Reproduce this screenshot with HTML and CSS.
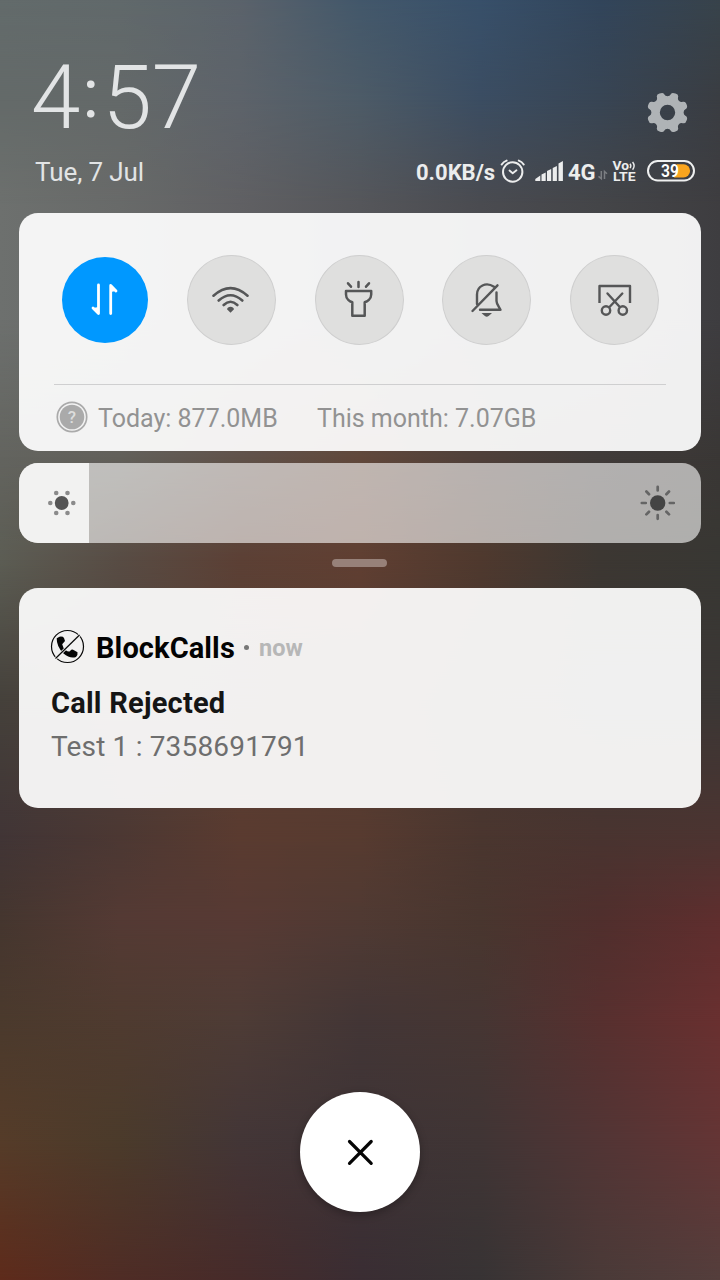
FILE: index.html
```html
<!DOCTYPE html>
<html lang="en">
<head>
<meta charset="utf-8">
<title>Notifications</title>
<link rel="stylesheet" href="styles.css">
</head>
<body>
<div class="wallpaper">
  <div class="band band-1"></div><div class="band band-2"></div><div class="band band-3"></div>
  <div class="band band-4"></div><div class="band band-5"></div><div class="band band-6"></div>
  <div class="band band-7"></div><div class="band band-8"></div><div class="band band-9"></div>
  <div class="band band-10"></div>
</div>
<main class="shade">
  <header class="header">
    <div class="when">
      <div class="clock">4<span class="colon">:</span>57</div>
      <div class="date">Tue, 7 Jul</div>
    </div>
    <div class="system">
      <svg class="gear" viewBox="647 92 41 41" width="41" height="41">
        <path fill-rule="evenodd" d="M659.5 93.6Q663 91.9 664.2 94.2Q665.200 96.300 667.500 96.300Q669.800 96.300 670.800 94.200Q672 91.900 675.500 93.600Q679 94.500 678 97.600Q677.600 99.700 679.100 101.100Q680.600 102.400 682.700 101.800Q685.600 101 686.700 104.800Q688 108 685.400 109.200Q683.600 110.300 683.600 112.500Q683.600 114.700 685.400 115.800Q688 117 686.700 120.200Q685.600 124 682.700 123.200Q680.600 122.600 679.100 123.900Q677.600 125.300 678 127.400Q679 130.500 675.500 131.400Q672 133.100 670.800 130.800Q669.800 128.700 667.500 128.700Q665.200 128.700 664.200 130.800Q663 133.100 659.500 131.400Q656 130.500 657 127.400Q657.400 125.300 655.900 123.900Q654.400 122.600 652.300 123.200Q649.400 124 648.300 120.200Q647 117 649.600 115.800Q651.400 114.700 651.400 112.500Q651.400 110.300 649.600 109.200Q647 108 648.300 104.800Q649.400 101 652.300 101.800Q654.400 102.400 655.900 101.100Q657.400 99.700 657 97.600Q656 94.500 659.500 93.600ZM667.500 104.800a7.700 7.700 0 1 0 0 15.400a7.700 7.700 0 1 0 0-15.400Z" fill="#afb3b6"/>
      </svg>
      <div class="status">
        <span class="rate">0.0KB/s</span>
        <svg class="alarm" viewBox="500 158 26 26" width="26" height="26" fill="none" stroke="#eceded" stroke-linecap="round">
          <circle cx="512.700" cy="172" r="9.700" stroke-width="2"/>
          <path d="M501.700 164.500Q503.500 161.700 506.600 160.600M518.800 160.600Q521.900 161.700 523.700 164.500" stroke-width="2"/>
          <path d="M509.500 170.500L512.700 173.300L516.500 170.200" stroke-width="1.800" stroke-linejoin="round"/>
        </svg>
        <svg class="signal" viewBox="535 160 29 22" width="29" height="22" fill="#eceded">
          <path d="M535.300 181V179L540.300 175.500V181ZM541.500 174.500L545.700 172.500V181H541.500ZM547 171L551.200 169V181H547ZM552.700 168L556.900 166V181H552.700ZM558.500 163.500L562.900 161V181H558.500Z"/>
        </svg>
        <span class="net">4G</span>
        <svg class="tiny-arrows" viewBox="597 170 11 12" width="11" height="12" fill="none" stroke="#7b7e82" stroke-width="1.500"><path d="M601.300 172V179.600L598.500 177.300M604.500 180V172.500L607 174.700"/></svg>
        <svg class="volte" viewBox="612 158 25 26" width="25" height="26" fill="#eceded">
          <text x="612.500" y="169.500" textLength="16.500" lengthAdjust="spacingAndGlyphs">Vo</text>
          <text x="613" y="181.300" textLength="22.500" lengthAdjust="spacingAndGlyphs">LTE</text>
          <path d="M630 163.700Q631.700 165.800 630 168.200M632.600 162Q635.600 165.800 632.600 169.700" fill="none" stroke="#eceded" stroke-width="1.400"/>
        </svg>
        <svg class="battery" viewBox="646 159 50 24" width="50" height="24">
          <rect x="648" y="161" width="46" height="19.500" rx="9.750" fill="none" stroke="#eff0f0" stroke-width="2"/>
          <path d="M677 164.200H683.500a6.600 6.600 0 0 1 0 13.200H674Z" fill="#faa51e"/>
          <text x="661" y="177" fill="#fff" textLength="18" lengthAdjust="spacingAndGlyphs">39</text>
        </svg>
      </div>
    </div>
  </header>

  <section class="panel">
    <div class="toggles">
      <div class="toggle active"><svg viewBox="90 282 30 36" width="30" height="36" fill="none" stroke="#fff" stroke-width="2.800" stroke-linecap="round" stroke-linejoin="round"><path d="M98.500 285V313.500L93 308M110.700 313.500V285.500L116 291"/><path d="M98.500 307V313.500L93 308ZM110.700 286V292L116 291Z" fill="#fff" stroke="none"/></svg></div>
      <div class="toggle"><svg viewBox="211 284 42 32" width="42" height="32" fill="none" stroke="#555657" stroke-width="2.600" stroke-linecap="round"><path d="M214.500 295.700Q231.500 280.500 248.500 295.700M219.700 300.500Q231.500 290 243.300 300.500M224.700 305Q231.500 298.500 238.300 305"/><path d="M228 309.300Q228.500 306.700 231.500 306.700Q234.500 306.700 235 309.300L231.500 312.700Z" fill="#555657" stroke="none"/></svg></div>
      <div class="toggle"><svg viewBox="343 280 32 40" width="32" height="40" fill="none" stroke="#555657" stroke-width="2.500" stroke-linecap="round" stroke-linejoin="round"><path d="M348 283.300L351 286.700M358.500 282V287M369 283.300L366 286.700M346 291H371.200V294.500C371.200 299 367 301.500 364.700 302.200V315.700H352.300V302.200C350 301.500 346 299 346 294.500Z"/></svg></div>
      <div class="toggle"><svg viewBox="470 281 34 38" width="34" height="38" fill="none" stroke="#555657" stroke-width="2.400" stroke-linecap="round" stroke-linejoin="round"><path d="M472.500 311L497.500 285.300M494 286.700C486 281.500 477 286 477 294.500V304M496.500 292.500V301C496.500 304 498.500 306 500.500 309.700H480"/><path d="M481.500 313H492Q488.500 316.700 486.700 316.700Q485 316.700 481.500 313Z" fill="#555657" stroke="none"/></svg></div>
      <div class="toggle"><svg viewBox="597 283 36 34" width="36" height="34" fill="none" stroke="#555657" stroke-width="2.400" stroke-linecap="round" stroke-linejoin="round"><path d="M599.500 303V286H630V303" stroke-linecap="butt"/><path d="M607.500 293.500L619.800 307M622.300 293.500L609.500 307"/><circle cx="606" cy="310.500" r="4.200"/><circle cx="622.800" cy="310.500" r="4.200"/></svg></div>
    </div>
    <div class="usage">
      <svg class="help" viewBox="56 401 32 32" width="32" height="32"><circle cx="72" cy="417" r="14.700" fill="none" stroke="#aaa" stroke-width="1.700"/><circle cx="72" cy="417" r="12.300" fill="#aaa"/><text x="72" y="423" text-anchor="middle" fill="#ddd">?</text></svg>
      <span class="today">Today: 877.0MB</span>
      <span class="month">This month: 7.07GB</span>
    </div>
  </section>

  <section class="brightness">
    <div class="level"><svg viewBox="47 489 30 28" width="30" height="28" fill="#8b8b8b"><circle cx="61.700" cy="503" r="6.900" fill="#555"/><circle cx="50.300" cy="503" r="2.300"/><circle cx="73.300" cy="503" r="2.300"/><circle cx="56.200" cy="493" r="2.300"/><circle cx="67.500" cy="493" r="2.300"/><circle cx="56.200" cy="513" r="2.300"/><circle cx="67.500" cy="513" r="2.300"/></svg></div>
    <svg viewBox="639 484 38 38" width="38" height="38" fill="none" stroke="#656565" stroke-width="2.700" stroke-linecap="round"><circle cx="657.700" cy="503" r="7.700" fill="#444" stroke="none"/><path d="M657.700 486.800V490.500M657.700 515V518.800M641.800 503H645.800M669.800 503H673.800M646.400 491.500L649 494.200M669 491.500L666.400 494.200M646.400 514.400L649 511.700M669 514.400L666.400 511.700"/></svg>
  </section>
  <div class="handle"></div>

  <article class="notice">
    <div class="app">
      <svg viewBox="50 629 35 35" width="35" height="35"><circle cx="67.500" cy="646.500" r="16" fill="none" stroke="#080808" stroke-width="1.200"/><path d="M56.700 638.200L59.500 636.700Q63 636.200 64 638L65 641L62.200 644.200Q63 648 65.500 650Q68 652 69.500 651.500L71.300 649.700Q72.500 649.200 74 650.200L77.500 652.200Q78 655 76 657Q70 659 63.500 653.500Q56.500 646.500 56.700 638.200Z" fill="#050505"/><path d="M55.500 658.500L79.500 635" stroke="#f1f1f0" stroke-width="3"/><path d="M55.500 658.500L79.500 635" stroke="#080808" stroke-width="1.200"/></svg>
      <span class="app-name">BlockCalls</span>
      <span class="dot"></span>
      <span class="age">now</span>
    </div>
    <h1 class="title">Call Rejected</h1>
    <p class="detail">Test 1 : 7358691791</p>
  </article>

  <button class="clear" aria-label="Clear notifications"><svg viewBox="346 1138 28 28" width="28" height="28" stroke="#050505" stroke-width="3.200" stroke-linecap="round"><path d="M349.500 1141.500L371.200 1163.300M371.200 1141.500L349.500 1163.300"/></svg></button>
</main>
</body>
</html>
```
FILE: styles.css
```css
* { box-sizing: border-box; }
body { margin: 0; font-family: Roboto, "Noto Sans", sans-serif; }
svg { display: block; flex: none; }
span, .clock, .date { white-space: nowrap; }

/* Wallpaper: horizontal colour rows, each one fading in over the row above it. */
.wallpaper { position: absolute; top: 0; left: 0; width: 720px; height: 1280px; overflow: hidden; background: linear-gradient(90deg, #636b6b, #61696b, #5b636b, #43586b, #38506a, #32455b, #38434b); }
.band { position: absolute; inset: 0; -webkit-mask-image: linear-gradient(transparent var(--from), #000 var(--to)); mask-image: linear-gradient(transparent var(--from), #000 var(--to)); }
.band-1 { --from: 0px; --to: 100px; background: linear-gradient(90deg, #646a69, #646969, #5d636a, #4d5b67, #3b4d62, #384554, #3a3d42); }
.band-2 { --from: 100px; --to: 205px; background: linear-gradient(90deg, #6d706e, #686a69, #606063, #55565a, #4a4b50, #444548, #3e3d40); }
.band-3 { --from: 320px; --to: 457px; background: linear-gradient(90deg, #63645f, #62605a, #60524a, #61483b, #4f403a, #403b39, #3a3735); }
.band-4 { --from: 457px; --to: 560px; background: linear-gradient(90deg, #5c5d54, #584c44, #5c4035, #603f32, #4f392e, #3c3732, #383733); }
.band-5 { --from: 560px; --to: 700px; background: linear-gradient(90deg, #45413b, #50413a, #583f34, #543b31, #473833, #3c3735, #3b3735); }
.band-6 { --from: 700px; --to: 835px; background: linear-gradient(90deg, #413536, #4c3833, #5a3b30, #573b30, #4a362f, #493430, #4c3431); }
.band-7 { --from: 835px; --to: 920px; background: linear-gradient(90deg, #45362f, #543a34, #573a34, #503a33, #49362f, #502f2d, #5f2e2e); }
.band-8 { --from: 920px; --to: 1020px; background: linear-gradient(90deg, #4b3a2d, #4f3b30, #4e3c36, #433636, #463633, #57302f, #693030); }
.band-9 { --from: 1020px; --to: 1140px; background: linear-gradient(90deg, #553c29, #4b3b2b, #433637, #3e3436, #403535, #523535, #643535); }
.band-10 { --from: 1140px; --to: 1280px; background: linear-gradient(90deg, #5e2b1b, #4f2c25, #462b2a, #3a2d33, #373334, #4a3a38, #543e3c); }

.shade {
  position: relative;
  width: 720px;
  height: 1280px;
  overflow: hidden;
  display: flex;
  flex-direction: column;
  padding: 0 19px;
}

.header { height: 213px; display: flex; justify-content: space-between; flex: none; }
.when { padding: 45px 0 0 12px; color: #e2e4e5; }
.clock { font-size: 89px; line-height: 105px; font-weight: 300; height: 105px; }
.colon { display: inline-block; width: 22px; padding-left: 2px; font-size: 68px; line-height: 1px; font-weight: 400; vertical-align: 11px; }
.date { font-size: 26px; line-height: 32px; padding-left: 4px; margin-top: 6px; letter-spacing: -0.1px; }
.system { display: flex; flex-direction: column; align-items: flex-end; padding-top: 92px; }
.gear { margin-right: 13px; }
.status { display: flex; align-items: center; height: 26px; margin: 25px 5px 0 0; color: #eceded; font-weight: 700; }
.rate { width: 84px; font-size: 22px; padding-top: 2px; }
.signal { margin-left: 9px; }
.net { width: 29px; margin-left: 4px; font-size: 22px; padding-top: 2px; }
.tiny-arrows { margin: 8px 4px 0 0; }
.volte { margin-right: 9px; font: 700 12px Roboto, sans-serif; }
.battery { font: 600 18px Roboto, sans-serif; }

.panel { height: 238px; flex: none; padding: 0 35px; border-radius: 19px; background: rgba(255,255,255,.925); }
.toggles { height: 172px; display: flex; align-items: center; justify-content: space-between; padding: 2px 7px 0 8px; border-bottom: 1px solid #cfcfd0; }
.toggle { width: 89px; height: 90px; display: flex; align-items: center; justify-content: center; border-radius: 50%; border: 1.5px solid #cfcfcf; background: #dfdfde; }
.active { width: 86px; height: 86px; border: 0; background: #0098ff; }
.usage { display: flex; align-items: center; height: 66px; padding-left: 2px; font-size: 25px; color: #929292; }
.help { font: 500 17px Roboto, sans-serif; margin-top: -2px; }
.today, .month { padding-top: 1px; }
.today { width: 219px; margin-left: 10px; }

.brightness { height: 80px; flex: none; margin-top: 12px; border-radius: 19px; overflow: hidden; background: rgba(255,255,255,.6); display: flex; align-items: center; justify-content: space-between; padding-right: 24px; }
.level { width: 70px; height: 80px; padding-left: 28px; display: flex; align-items: center; background: #f2f2f1; }
.handle { width: 55px; height: 8px; flex: none; margin: 16px 0 21px 313px; border-radius: 4px; background: #978179; }

.notice { height: 220px; flex: none; padding: 41px 31px 0; border-radius: 19px; background: rgba(255,255,255,.925); }
.app { display: flex; align-items: center; height: 35px; }
.app-name { width: 143px; margin-left: 11px; padding-top: 3px; font-size: 29px; letter-spacing: 0.1px; font-weight: 700; color: #030303; }
.dot { width: 5px; height: 5px; margin: 2px 0 0 5px; border-radius: 50%; background: #777; }
.age { margin: 3px 0 0 10px; font-size: 23.500px; font-weight: 700; color: #b7b7b7; }
.title { margin: 21px 0 0 1px; font-size: 29px; letter-spacing: 0.230px; line-height: 36px; font-weight: 700; color: #151515; }
.detail { margin: 8px 0 0 1px; font-size: 28px; letter-spacing: 0.170px; line-height: 36px; color: #6e6e6e; }

.clear { width: 120px; height: 120px; flex: none; margin: 284px auto 0; border: 0; border-radius: 50%; background: #fff; display: flex; align-items: center; justify-content: center; box-shadow: 0 3px 8px rgba(0,0,0,.28); }
```
